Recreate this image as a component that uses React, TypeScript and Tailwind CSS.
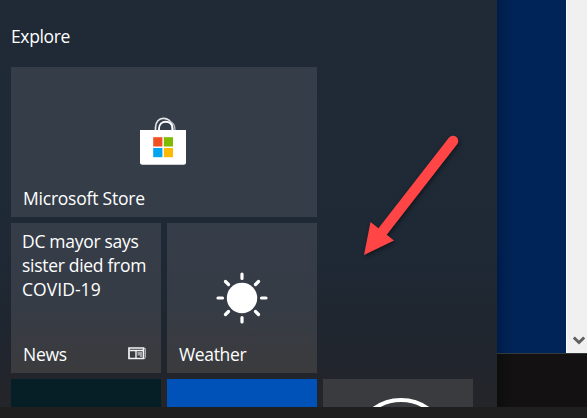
import React from 'react';

function Tile({ className = '', children }: { className?: string; children?: React.ReactNode }) {
  return <div className={`relative shrink-0 ${className}`}>{children}</div>;
}

function StoreIcon() {
  return (
    <svg width="48" height="50" viewBox="0 0 48 50" fill="none">
      <path d="M16.500 15V10.500C16.500 -1.500 31.500 -1.500 33.500 9V15" stroke="#e4e7ea" strokeWidth="1.700" />
      <path d="M31 4.500Q36 6 36 13" stroke="#b9bfc6" strokeWidth="1.200" />
      <path d="M20 15V11.500C20 2.500 33.500 2.500 33.500 11.500V15" stroke="#fff" strokeWidth="1.800" />
      <path d="M1 13H47V45.200Q47 47.700 44.500 47.700H3.500Q1 47.700 1 45.200Z" fill="#fff" />
      <path d="M14.200 20.200H23.400V29.500H14.200Z" fill="#f25022" />
      <path d="M24.800 20.200H34V29.500H24.800Z" fill="#7fba00" />
      <path d="M14.200 31H23.400V40.200H14.200Z" fill="#00a4ef" />
      <path d="M24.800 31H34V40.200H24.800Z" fill="#ffb900" />
    </svg>
  );
}

function SunIcon() {
  return (
    <svg width="54" height="54" viewBox="0 0 54 54">
      <circle cx="27" cy="27" r="15.200" fill="#fff" />
      <path
        d="M27 3V7.500M27 46.500V51M3 27H7.500M46.500 27H51M10.500 10.500L13.500 13.500M43.500 10.500L40.500 13.500M10.500 43.500L13.500 40.500M43.500 43.500L40.500 40.500"
        stroke="#fff"
        strokeWidth="3.200"
        strokeLinecap="round"
      />
    </svg>
  );
}

function NewsIcon() {
  return (
    <svg width="19" height="13" viewBox="0 0 19 13" fill="none">
      <path d="M16 1.500H17.500V10.500Q17.500 11.500 16 11.500" stroke="#a9adb2" strokeWidth="1" />
      <path d="M1 1H15.500V11.500H1Z" stroke="#f1f2f3" strokeWidth="1.700" />
      <path d="M2 3.500H15M8 4V11" stroke="#f1f2f3" strokeWidth="1.400" />
      <path d="M9.500 5H14V10H12V8.500H9.500Z" fill="#a2a6ab" />
    </svg>
  );
}

export default function App() {
  return (
    <main className="relative flex h-[418px] w-[587px] flex-col overflow-hidden bg-[#1f1f1f] font-['Open_Sans','Noto_Sans',sans-serif] text-[17.500px] leading-6 text-white">
      <div className="flex h-[407px]">
        <section className="flex w-[497px] shrink-0 flex-col overflow-hidden bg-[linear-gradient(180deg,#1f2a36_0%,#1e2935_62%,#20252e_85%,#242529_100%)] pl-[11px]">
          <h1 className="h-[67px] shrink-0 pt-6 font-normal">
            <span className="tracking-[-0.350px]">Explore</span>
          </h1>
          <div className="flex w-[462px] flex-col gap-1.5">
            <Tile className="flex h-[150px] w-[306px] justify-center bg-[#353d48] pt-[50px]">
              <div className="-ml-0.5"><StoreIcon /></div>
              <span className="absolute bottom-[7px] left-3 tracking-[-0.220px]">Microsoft Store</span>
            </Tile>
            <div className="flex gap-1.5">
              <Tile className="h-[150px] w-[150px] bg-[linear-gradient(180deg,#353d48_0%,#363c46_55%,#3b3b3d_100%)] pl-[11px] pt-1.5">
                <p className="whitespace-nowrap tracking-[-0.300px]">DC mayor says<br />sister died from<br /><span className="tracking-[0.050px]">COVID-19</span></p>
                <span className="absolute bottom-[7px] left-3 tracking-[-0.300px]">News</span>
                <div className="absolute bottom-[13px] right-[14px]"><NewsIcon /></div>
              </Tile>
              <Tile className="flex h-[150px] w-[150px] justify-center bg-[linear-gradient(180deg,#353d48_0%,#363c46_55%,#3b3b3d_100%)] pt-12">
                <SunIcon />
                <span className="absolute bottom-[7px] left-3 tracking-[-0.350px]">Weather</span>
              </Tile>
            </div>
            <div className="flex h-7 gap-1.5 overflow-hidden">
              <Tile className="w-[150px] bg-[#061e25]" />
              <Tile className="w-[150px] bg-[#0052b8]" />
              <Tile className="w-[150px] bg-[#3a3b3e]">
                <svg className="block" width="150" height="28" viewBox="0 0 150 28">
                  <circle cx="78" cy="67" r="46" fill="none" stroke="#fff" strokeWidth="4.200" />
                </svg>
              </Tile>
            </div>
          </div>
        </section>
        <section className="flex min-w-0 flex-1 flex-col">
          <div className="flex h-[353px]">
            <div className="w-[69px] bg-[linear-gradient(90deg,#001c47_0px,#002252_9px,#002457_18px)]" />
            <div className="flex flex-1 items-end justify-center border-l border-white bg-[#f0f0f0] pb-[7px] pl-1">
              <svg width="12" height="10" viewBox="0 0 12 10" fill="none">
                <path d="M0.800 1.500L6 6.500L11.200 1.500" stroke="#606060" strokeWidth="3" />
              </svg>
            </div>
          </div>
          <div className="flex-1 border-t border-[#333a3c] bg-[linear-gradient(90deg,#0e0d0e_0px,#131111_16px)]" />
        </section>
      </div>
      <svg className="pointer-events-none absolute left-[350px] top-[120px] drop-shadow-[1px_2px_2px_rgba(0,0,0,0.450)]" width="120" height="150" viewBox="0 0 120 150">
        <path d="M103 21L33 111" stroke="#ff4545" strokeWidth="10.500" strokeLinecap="round" />
        <path d="M14 135L20.500 102L44 120.500Z" fill="#ff4545" />
      </svg>
    </main>
  );
}
